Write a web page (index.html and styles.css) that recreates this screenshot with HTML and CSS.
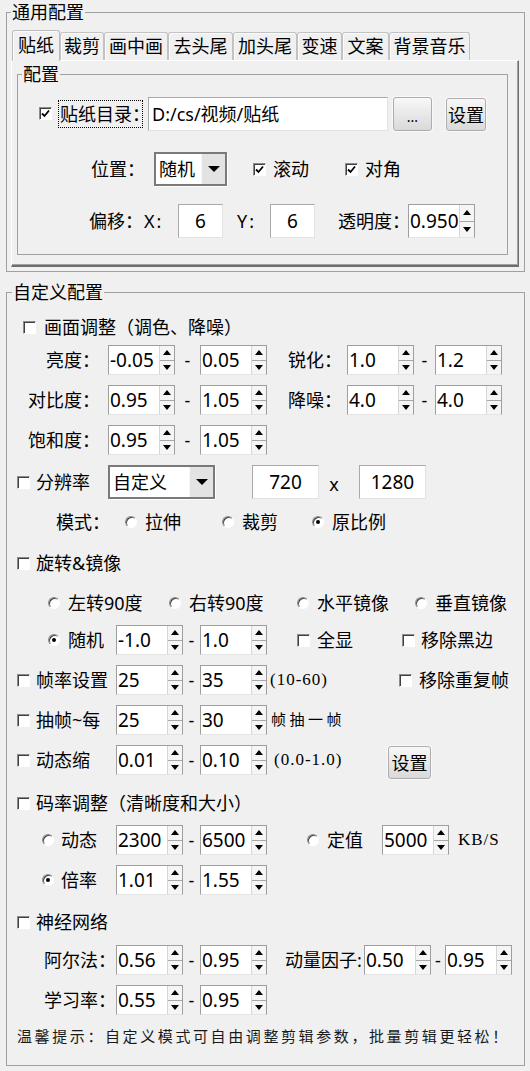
FILE: index.html
```html
<!DOCTYPE html>
<html lang="zh-CN">
<head>
<meta charset="utf-8">
<title>配置</title>
<link rel="stylesheet" href="styles.css">
</head>
<body>
<fieldset class="grp grp-general">
  <legend class="lg-general">通用配置</legend>
  <div class="general-body">
    <div class="tabstrip">
      <div class="tab sel tw1">贴纸</div>
      <div class="tab tw2">裁剪</div>
      <div class="tab tw3">画中画</div>
      <div class="tab tw4">去头尾</div>
      <div class="tab tw5">加头尾</div>
      <div class="tab tw6">变速</div>
      <div class="tab tw7">文案</div>
      <div class="tab tw8">背景音乐</div>
    </div>
    <div class="tabpage">
      <fieldset class="grp grp-cfg">
        <legend class="lg-cfg">配置</legend>
        <div class="row cfg-r1">
          <span class="cb on c-dir"><svg viewBox="0 0 11 11"><path d="M2 5.5 4.5 8 9 2.5"/></svg></span>
          <span class="focus">贴纸目录：</span>
          <div class="tb tb-dir">D:/cs/视频/贴纸</div>
          <div class="btn btn-dots">...</div>
          <div class="btn btn-set1">设置</div>
        </div>
        <div class="row cfg-r2">
          <span class="txt l-pos">位置：</span>
          <div class="combo combo-pos"><span class="cv">随机</span><span class="cbtn"><i class="tri"></i></span></div>
          <span class="cb on c-scroll"><svg viewBox="0 0 11 11"><path d="M2 5.5 4.5 8 9 2.5"/></svg></span><span class="txt t7">滚动</span>
          <span class="cb on c-diag"><svg viewBox="0 0 11 11"><path d="M2 5.5 4.5 8 9 2.5"/></svg></span><span class="txt t7">对角</span>
        </div>
        <div class="row cfg-r3">
          <span class="txt l-off">偏移：</span>
          <span class="txt l-x">X:</span>
          <div class="tb tb-num">6</div>
          <span class="txt l-y">Y:</span>
          <div class="tb tb-num">6</div>
          <span class="txt l-alpha">透明度：</span>
          <div class="spin spin-lg"><span class="v">0.950</span><span class="ar"><i class="up"></i><i class="dn"></i></span></div>
        </div>
      </fieldset>
    </div>
  </div>
</fieldset>

<fieldset class="grp grp-custom">
  <legend class="lg-custom">自定义配置</legend>

  <div class="row mt10">
    <span class="cb cbA"></span><span class="txt tA">画面调整（调色、降噪）</span>
  </div>
  <div class="row mt3">
    <span class="txt lr">亮度：</span>
    <div class="spin sp8"><span class="v">-0.05</span><span class="ar"><i class="up"></i><i class="dn"></i></span></div>
    <span class="dash d25">-</span>
    <div class="spin"><span class="v">0.05</span><span class="ar"><i class="up"></i><i class="dn"></i></span></div>
    <span class="txt l-sharp">锐化：</span>
    <div class="spin sp5"><span class="v">1.0</span><span class="ar"><i class="up"></i><i class="dn"></i></span></div>
    <span class="dash d21">-</span>
    <div class="spin"><span class="v">1.2</span><span class="ar"><i class="up"></i><i class="dn"></i></span></div>
  </div>
  <div class="row mt10">
    <span class="txt lr">对比度：</span>
    <div class="spin sp8"><span class="v">0.95</span><span class="ar"><i class="up"></i><i class="dn"></i></span></div>
    <span class="dash d25">-</span>
    <div class="spin"><span class="v">1.05</span><span class="ar"><i class="up"></i><i class="dn"></i></span></div>
    <span class="txt l-sharp">降噪：</span>
    <div class="spin sp5"><span class="v">4.0</span><span class="ar"><i class="up"></i><i class="dn"></i></span></div>
    <span class="dash d21">-</span>
    <div class="spin"><span class="v">4.0</span><span class="ar"><i class="up"></i><i class="dn"></i></span></div>
  </div>
  <div class="row mt10">
    <span class="txt lr">饱和度：</span>
    <div class="spin sp8"><span class="v">0.95</span><span class="ar"><i class="up"></i><i class="dn"></i></span></div>
    <span class="dash d25">-</span>
    <div class="spin"><span class="v">1.05</span><span class="ar"><i class="up"></i><i class="dn"></i></span></div>
  </div>

  <div class="row row34 mt10">
    <span class="cb cbB"></span><span class="txt tB">分辨率</span>
    <div class="combo combo-res"><span class="cv">自定义</span><span class="cbtn"><i class="tri"></i></span></div>
    <div class="tb tb-res tb-res1">720</div>
    <span class="txt by">x</span>
    <div class="tb tb-res tb-res2">1280</div>
  </div>
  <div class="row mt8">
    <span class="txt l-mode">模式：</span>
    <span class="rb rb-m1"></span><span class="txt t8">拉伸</span>
    <span class="rb rb-m2"></span><span class="txt t8">裁剪</span>
    <span class="rb on rb-m3"></span><span class="txt t8">原比例</span>
  </div>

  <div class="row mt11">
    <span class="cb cbB"></span><span class="txt tB">旋转&amp;镜像</span>
  </div>
  <div class="row mt10">
    <div class="opt o-rot1"><span class="rb"></span><span class="txt t8">左转90度</span></div>
    <div class="opt o-rot2"><span class="rb"></span><span class="txt t8">右转90度</span></div>
    <div class="opt o-rot3"><span class="rb"></span><span class="txt t8">水平镜像</span></div>
    <div class="opt"><span class="rb"></span><span class="txt t8">垂直镜像</span></div>
  </div>
  <div class="row mt7">
    <div class="opt o-rand"><span class="rb on"></span><span class="txt t8">随机</span></div>
    <div class="spin"><span class="v">-1.0</span><span class="ar"><i class="up"></i><i class="dn"></i></span></div>
    <span class="dash d17">-</span>
    <div class="spin"><span class="v">1.0</span><span class="ar"><i class="up"></i><i class="dn"></i></span></div>
    <div class="opt o-full"><span class="cb"></span><span class="txt t7">全显</span></div>
    <div class="opt"><span class="cb"></span><span class="txt t6">移除黑边</span></div>
  </div>

  <div class="row mt10">
    <span class="cb cbB"></span><span class="txt tB lb80">帧率设置</span>
    <div class="spin"><span class="v">25</span><span class="ar"><i class="up"></i><i class="dn"></i></span></div>
    <span class="dash d17">-</span>
    <div class="spin"><span class="v">35</span><span class="ar"><i class="up"></i><i class="dn"></i></span></div>
    <span class="note n-fps">(10-60)</span>
    <span class="cb"></span><span class="txt t7">移除重复帧</span>
  </div>
  <div class="row mt10">
    <span class="cb cbB"></span><span class="txt tB lb80">抽帧~每</span>
    <div class="spin"><span class="v">25</span><span class="ar"><i class="up"></i><i class="dn"></i></span></div>
    <span class="dash d17">-</span>
    <div class="spin"><span class="v">30</span><span class="ar"><i class="up"></i><i class="dn"></i></span></div>
    <span class="note cjk n-drop">帧抽一帧</span>
  </div>
  <div class="row mt10">
    <span class="cb cbB"></span><span class="txt tB lb80">动态缩</span>
    <div class="spin"><span class="v">0.01</span><span class="ar"><i class="up"></i><i class="dn"></i></span></div>
    <span class="dash d17">-</span>
    <div class="spin"><span class="v">0.10</span><span class="ar"><i class="up"></i><i class="dn"></i></span></div>
    <span class="note n-zoom">(0.0-1.0)</span>
    <div class="btn btn-set2">设置</div>
  </div>

  <div class="row mt13">
    <span class="cb cbB"></span><span class="txt tB">码率调整（清晰度和大小）</span>
  </div>
  <div class="row mt7">
    <div class="opt o-rate"><span class="rb"></span><span class="txt t7">动态</span></div>
    <div class="spin"><span class="v">2300</span><span class="ar"><i class="up"></i><i class="dn"></i></span></div>
    <span class="dash d17">-</span>
    <div class="spin"><span class="v">6500</span><span class="ar"><i class="up"></i><i class="dn"></i></span></div>
    <div class="opt o-fixed"><span class="rb"></span><span class="txt t8">定值</span></div>
    <div class="spin"><span class="v">5000</span><span class="ar"><i class="up"></i><i class="dn"></i></span></div>
    <span class="note n-kb">KB/S</span>
  </div>
  <div class="row mt10">
    <div class="opt o-rate"><span class="rb on"></span><span class="txt t7">倍率</span></div>
    <div class="spin"><span class="v">1.01</span><span class="ar"><i class="up"></i><i class="dn"></i></span></div>
    <span class="dash d17">-</span>
    <div class="spin"><span class="v">1.55</span><span class="ar"><i class="up"></i><i class="dn"></i></span></div>
  </div>

  <div class="row mt12">
    <span class="cb cbB"></span><span class="txt tB">神经网络</span>
  </div>
  <div class="row mt8">
    <span class="txt lr2">阿尔法：</span>
    <div class="spin"><span class="v">0.56</span><span class="ar"><i class="up"></i><i class="dn"></i></span></div>
    <span class="dash d17">-</span>
    <div class="spin"><span class="v">0.95</span><span class="ar"><i class="up"></i><i class="dn"></i></span></div>
    <span class="txt l-mom">动量因子:</span>
    <div class="spin sp-mom"><span class="v">0.50</span><span class="ar"><i class="up"></i><i class="dn"></i></span></div>
    <span class="dash d14">-</span>
    <div class="spin"><span class="v">0.95</span><span class="ar"><i class="up"></i><i class="dn"></i></span></div>
  </div>
  <div class="row mt10">
    <span class="txt lr2">学习率：</span>
    <div class="spin"><span class="v">0.55</span><span class="ar"><i class="up"></i><i class="dn"></i></span></div>
    <span class="dash d17">-</span>
    <div class="spin"><span class="v">0.95</span><span class="ar"><i class="up"></i><i class="dn"></i></span></div>
  </div>

  <div class="row row20 mt12">
    <span class="tip">温馨提示：自定义模式可自由调整剪辑参数，批量剪辑更轻松！</span>
  </div>
</fieldset>
</body>
</html>
```

FILE: styles.css
```css
* { box-sizing: border-box; }
html, body { margin: 0; padding: 0; }
body {
  background: #f0f0f0;
  width: 530px;
  height: 1071px;
  overflow: hidden;
  font-family: "Noto Sans", "Noto Sans CJK SC", sans-serif;
  font-size: 18px;
  line-height: 20px;
  color: #000;
}

/* group boxes */
.grp {
  margin: 0 0 0 6px;
  padding: 0;
  width: 519px;
  min-width: 0;
  border: 1px solid #a0a0a0;
}
.grp > legend {
  padding: 0 1px;
  height: 20px;
  line-height: 20px;
  font-size: 18px;
}
.lg-general { margin-left: 4px; }
.lg-cfg { margin-left: 4px; }
.lg-custom { margin-left: 5px; }

.grp-general { margin-top: 2px; }
.general-body { padding: 8px 5px 4px 4px; }

.grp-custom { margin-top: 10px; padding-bottom: 18px; }

/* tabs */
.tabstrip {
  display: flex;
  align-items: flex-end;
  height: 30px;
  padding-left: 1px;
  position: relative;
  z-index: 1;
}
.tab {
  flex: none;
  height: 28px;
  line-height: 26px;
  text-align: center;
  font-size: 18px;
  border: 1px solid #c2c2c2;
  border-bottom: none;
  border-radius: 3px 3px 0 0;
  box-shadow: inset 1px 1px 0 #fbfbfb;
  background: #f0f0f0;
}
.tab.sel {
  height: 31px;
  line-height: 29px;
  margin-bottom: -1px;
  border-color: #bcbcbc;
}
.tw1 { width: 48px; }
.tw2 { width: 44px; }
.tw3 { width: 64px; }
.tw4 { width: 65px; }
.tw5 { width: 64px; }
.tw6 { width: 45px; }
.tw7 { width: 47px; }
.tw8 { width: 81px; }

.tabpage {
  height: 207px;
  padding: 3px 9px 10px 5px;
  border-top: 1px solid #fff;
  border-left: 1px solid #fff;
  border-right: 1px solid #6e6e6e;
  border-bottom: 2px solid #6e6e6e;
  box-shadow: inset -1px -1px 0 #a0a0a0;
}
.grp-cfg {
  margin: 0;
  width: 491px;
  padding-bottom: 16px;
}

/* rows */
.row {
  display: flex;
  align-items: center;
  height: 30px;
  white-space: nowrap;
}
.row34 { height: 34px; }
.row20 { height: 20px; }
.mt3 { margin-top: 3px; }
.mt7 { margin-top: 7px; }
.mt8 { margin-top: 8px; }
.mt10 { margin-top: 10px; }
.mt11 { margin-top: 11px; }
.mt12 { margin-top: 12px; }
.mt13 { margin-top: 13px; }

.cfg-r1 { height: 35px; margin-top: 12px; }
.cfg-r2 { height: 34px; margin-top: 21px; }
.cfg-r3 { height: 34px; margin-top: 18px; }

.txt { flex: none; line-height: 20px; white-space: nowrap; }
.t6 { margin-left: 6px; }
.t7 { margin-left: 7px; }
.t8 { margin-left: 8px; }

/* checkbox */
.cb {
  flex: none;
  width: 13px;
  height: 13px;
  background: #fff;
  border: 1px solid;
  border-color: #8c8c8c #fff #fff #8c8c8c;
  box-shadow: inset 1px 1px 0 #3f3f3f;
  display: flex;
  align-items: center;
  justify-content: center;
}
.cb svg {
  width: 11px;
  height: 11px;
  fill: none;
  stroke: #000;
  stroke-width: 1.8;
}
.cbA { margin-left: 16px; }
.cbB { margin-left: 10px; }
.tA { margin-left: 8px; }
.tB { margin-left: 6px; }

/* radio */
.rb {
  flex: none;
  width: 12px;
  height: 12px;
  border-radius: 50%;
  background: #fff;
  border: 1px solid;
  border-color: #8c8c8c #fff #fff #8c8c8c;
  box-shadow: inset 1px 1px 0 #444;
  display: flex;
  align-items: center;
  justify-content: center;
}
.rb.on::after {
  content: "";
  width: 4px;
  height: 4px;
  border-radius: 50%;
  background: #000;
}
.opt { flex: none; display: flex; align-items: center; }

/* text boxes */
.tb {
  flex: none;
  height: 34px;
  background: #fff;
  border: 1px solid;
  border-color: #a9a9a9 #e2e2e2 #e2e2e2 #a9a9a9;
  line-height: 32px;
  padding-left: 3px;
  white-space: nowrap;
  overflow: hidden;
}
.tb-num, .tb-res {
  font-size: 19px;
  text-align: center;
  padding-left: 0;
}
.tb-num { width: 45px; }
.tb-res { width: 67px; }

/* spinner */
.spin {
  flex: none;
  display: flex;
  width: 67px;
  height: 30px;
  background: #fff;
  border: 1px solid;
  border-color: #9e9e9e #9e9e9e #e4e4e4 #9e9e9e;
}
.spin-lg { height: 34px; }
.spin .v {
  flex: 1;
  font-size: 19px;
  line-height: 28px;
  padding-left: 1px;
  overflow: hidden;
}
.spin-lg .v { line-height: 32px; }
.spin .ar {
  flex: none;
  width: 15px;
  display: flex;
  flex-direction: column;
  border-left: 1px solid #d6d6d6;
  background: #f5f5f5;
}
.spin .ar i {
  flex: 1;
  display: flex;
  align-items: center;
  justify-content: center;
}
.spin .ar .up { border-bottom: 1px solid #a6a6a6; }
.spin .ar i::after {
  content: "";
  width: 0;
  height: 0;
  border-left: 4.5px solid transparent;
  border-right: 4.5px solid transparent;
}
.spin .ar .up::after { border-bottom: 5px solid #000; }
.spin .ar .dn::after { border-top: 5px solid #000; }

.dash { flex: none; text-align: center; line-height: 20px; }
.d25 { width: 25px; }
.d21 { width: 21px; }
.d17 { width: 17px; }
.d14 { width: 14px; }

/* combo */
.combo {
  flex: none;
  display: flex;
  height: 34px;
  background: #fff;
  border: 2px solid #7a7a7a;
  box-shadow: 1px 1px 0 #fff;
}
.combo .cv { flex: 1; line-height: 30px; padding-left: 3px; }
.combo .cbtn {
  flex: none;
  width: 24px;
  background: #e3e3e3;
  border-left: 1px solid #f8f8f8;
  display: flex;
  align-items: center;
  justify-content: center;
}
.tri {
  width: 0;
  height: 0;
  border-left: 6px solid transparent;
  border-right: 6px solid transparent;
  border-top: 6px solid #000;
}

/* buttons */
.btn {
  flex: none;
  display: flex;
  align-items: center;
  justify-content: center;
  border: 1px solid #adadad;
  border-radius: 3px;
  background: linear-gradient(#f8f8f8, #d9d9d9);
  box-shadow: 0 0 0 1px #f9f9f9;
}

/* general tab rows */
.c-dir { margin-left: 21px; }
.focus {
  flex: none;
  margin-left: 6px;
  width: 85px;
  height: 28px;
  border: 1px dotted #000;
  line-height: 26px;
  padding-left: 1px;
}
.tb-dir { margin-left: 5px; width: 240px; }
.btn-dots { margin-left: 5px; width: 39px; height: 34px; font-size: 14px; padding-top: 6px; }
.btn-set1 { margin-left: 14px; width: 40px; height: 33px; align-self: flex-end; }

.l-pos { margin-left: 73px; width: 54px; }
.combo-pos { margin-left: 9px; width: 73px; }
.c-scroll { margin-left: 26px; }
.c-diag { margin-left: 36px; }

.l-off { margin-left: 71px; width: 54px; }
.l-x { margin-left: 1px; width: 34px; letter-spacing: 2px; }
.l-y { margin-left: 14px; width: 33px; letter-spacing: 2px; }
.l-alpha { margin-left: 23px; width: 72px; }
.spin-lg { margin-left: -2px; }

/* custom rows */
.lr { margin-left: 17px; width: 76px; text-align: right; }
.sp8 { margin-left: 8px; }
.sp5 { margin-left: 5px; }
.l-sharp { margin-left: 21px; width: 54px; }

.combo-res { margin-left: 18px; width: 107px; }
.tb-res1 { margin-left: 37px; }
.by { width: 30px; text-align: center; padding-top: 4px; }
.tb-res2 { margin-left: 10px; }

.l-mode { margin-left: 49px; width: 54px; }
.rb-m1 { margin-left: 15px; }
.rb-m2 { margin-left: 41px; }
.rb-m3 { margin-left: 34px; }

.o-rot1 { margin-left: 41px; width: 121px; }
.o-rot2 { width: 128px; }
.o-rot3 { width: 118px; }

.o-rand { margin-left: 41px; width: 68px; }
.o-full { margin-left: 30px; width: 105px; }

.lb80 { width: 80px; }

.note {
  flex: none;
  font-family: "Liberation Serif", "Noto Sans CJK SC", serif;
  font-size: 17px;
  line-height: 20px;
  letter-spacing: 1px;
  white-space: nowrap;
}
.note.cjk { font-size: 15px; letter-spacing: 3.5px; }
.n-fps { margin-left: 3px; width: 129px; }
.n-drop { margin-left: 4px; }
.n-zoom { margin-left: 7px; width: 114px; }
.btn-set2 { width: 43px; height: 33px; align-self: flex-end; margin-bottom: -4px; }

.o-rate { margin-left: 35px; width: 74px; }
.o-fixed { margin-left: 40px; width: 75px; }
.n-kb { margin-left: 9px; }

.lr2 { width: 109px; text-align: right; }
.l-mom { margin-left: 18px; width: 78px; }
.sp-mom { margin-left: 1px; }

.tip {
  margin-left: 10px;
  font-family: "Liberation Serif", "Noto Sans CJK SC", serif;
  font-size: 15px;
  letter-spacing: 2.6px;
  color: #1a1a1a;
  white-space: nowrap;
}
```
